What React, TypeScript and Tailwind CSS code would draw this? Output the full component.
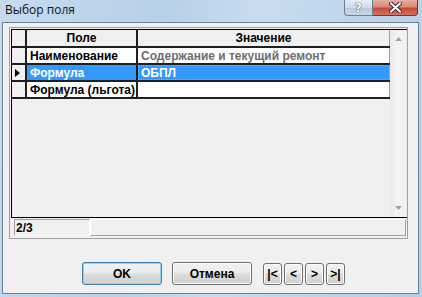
import React from "react";

const cell = "font-['Liberation_Sans',Arial,sans-serif] font-bold text-[12px] leading-none";

type Row = { name: string; value: string; selected?: boolean; muted?: boolean };

const ROWS: Row[] = [
  { name: "Наименование", value: "Содержание и текущий ремонт", muted: true },
  { name: "Формула", value: "ОБПЛ", selected: true },
  { name: "Формула (льгота)", value: "" },
];

function WinButton({ children, def, className = "" }: { children: React.ReactNode; def?: boolean; className?: string }) {
  return (
    <button
      className={`${className} flex items-center justify-center rounded-[3px] border ${
        def ? "border-[#3c7fb1] shadow-[inset_0_0_0_1px_#8fd3f6]" : "border-[#707070] shadow-[inset_0_0_0_1px_#fcfcfc]"
      } bg-[linear-gradient(#f2f2f2_0%,#ebebeb_48%,#dddddd_52%,#cfcfcf_100%)] text-black ${cell}`}
    >
      {children}
    </button>
  );
}

export default function App() {
  return (
    <div className="w-[422px] h-[297px] flex flex-col pl-[2px] pr-[3px] pb-[3px] bg-[linear-gradient(100deg,#c6dbf0_0%,#b7cfe8_35%,#c9dcef_55%,#b4cce6_100%)]">
      {/* title bar */}
      <div className="h-[22px] flex items-start shrink-0">
        <span className="pl-[3px] pt-[3px] font-['Open_Sans',sans-serif] text-[12px] leading-[14px] text-[#111]">Выбор поля</span>
        <div className="ml-auto mr-[1px] flex">
          <div className="w-[29px] h-[16px] rounded-bl-[4px] border border-t-0 border-[#6b7d95] bg-[linear-gradient(#e3ecf5_0%,#cfdbe8_50%,#b9c9da_51%,#c9d8e8_100%)] flex items-center justify-center text-white font-['DejaVu_Sans',sans-serif] font-bold text-[12px] leading-none [text-shadow:0_0_1px_#333,0_0_1px_#333]">
            ?
          </div>
          <div className="w-[45px] h-[16px] rounded-br-[4px] border border-t-0 border-l-0 border-[#6b3a32] bg-[linear-gradient(#e6ada3_0%,#d98a7b_45%,#c74a34_55%,#d7705c_100%)] flex items-center justify-center">
            <svg width="13" height="11" viewBox="0 0 13 11">
              <path d="M2 1.5 L11 9.5 M11 1.5 L2 9.5" stroke="#3a2a2a" strokeWidth="4" strokeLinecap="square" />
              <path d="M2 1.5 L11 9.5 M11 1.5 L2 9.5" stroke="#fff" strokeWidth="2" strokeLinecap="square" />
            </svg>
          </div>
        </div>
      </div>

      {/* client area */}
      <div className="flex-1 flex flex-col border border-[#6f8195] bg-[#f0f0f0] pl-[6px] pt-[4px]">
        {/* panel */}
        <div className="w-[399px] h-[212px] border border-[#a0a0a0] pl-[1px] pt-[1px] flex flex-col">
          {/* grid */}
          <div className="h-[189px] flex border-t border-l border-b border-black">
            <div className="flex-1 flex flex-col">
              {/* header */}
              <div className="h-[18px] flex border-b-2 border-[#1f1f1f] bg-[#f0f0f0]">
                <div className="w-[15px] border-r-2 border-[#1f1f1f]" />
                <div className={`w-[111px] border-r-2 border-[#1f1f1f] flex items-center justify-center ${cell}`}>Поле</div>
                <div className={`flex-1 border-r border-[#a0a0a0] flex items-center justify-center ${cell}`}>Значение</div>
              </div>
              {ROWS.map((r) => (
                <div key={r.name} className="h-[17px] flex border-b-2 border-[#1f1f1f]">
                  <div className="w-[15px] border-r-2 border-[#1f1f1f] bg-[#f0f0f0] flex items-center pl-[3px]">
                    {r.selected && (
                      <svg width="5" height="8" viewBox="0 0 5 8">
                        <path d="M0 0 L5 4 L0 8 Z" fill="#000" />
                      </svg>
                    )}
                  </div>
                  <div
                    className={`w-[111px] border-r-2 border-[#1f1f1f] flex items-center pl-[3px] whitespace-nowrap overflow-hidden ${cell} ${
                      r.selected ? "bg-[#3399ff] text-white" : "bg-white text-black"
                    }`}
                  >
                    {r.name}
                  </div>
                  <div
                    className={`flex-1 border-r border-[#a0a0a0] flex items-center pl-[3px] whitespace-nowrap ${cell} ${
                      r.selected
                        ? "bg-[#3399ff] text-white outline-1 outline-dotted outline-[#f59a23] -outline-offset-1"
                        : r.muted
                        ? "bg-white text-[#6d6d6d]"
                        : "bg-white text-black"
                    }`}
                  >
                    {r.value}
                  </div>
                </div>
              ))}
            </div>
            {/* scrollbar */}
            <div className="w-[17px] flex flex-col items-center justify-between bg-[linear-gradient(90deg,#e8e8e8,#f4f4f4_40%,#eeeeee)] py-[7px]">
              <svg width="7" height="4" viewBox="0 0 7 4">
                <path d="M0 4 L3.5 0 L7 4 Z" fill="#a3a3a3" />
              </svg>
              <svg width="7" height="4" viewBox="0 0 7 4">
                <path d="M0 0 L3.5 4 L7 0 Z" fill="#a3a3a3" />
              </svg>
            </div>
          </div>
          {/* status bar */}
          <div className="flex pt-[1px] pl-[3px] pr-[1px]">
            <div className={`w-[76px] h-[17px] border-t border-l border-[#a0a0a0] border-r border-b border-r-white border-b-white flex items-center pl-[1px] ${cell}`}>
              2/3
            </div>
            <div className="flex-1 h-[17px] border-t border-l border-white border-r border-b border-r-[#a0a0a0] border-b-[#a0a0a0]" />
          </div>
        </div>

        {/* buttons */}
        <div className="mt-[23px] flex items-center pl-[73px]">
          <WinButton def className="w-[80px] h-[23px]">OK</WinButton>
          <WinButton className="w-[80px] h-[23px] ml-[10px]">Отмена</WinButton>
          <div className="ml-[11px] flex gap-[2px]">
            <WinButton className="w-[19px] h-[22px]">|&lt;</WinButton>
            <WinButton className="w-[19px] h-[22px]">&lt;</WinButton>
            <WinButton className="w-[19px] h-[22px]">&gt;</WinButton>
            <WinButton className="w-[19px] h-[22px]">&gt;|</WinButton>
          </div>
        </div>
      </div>
    </div>
  );
}
